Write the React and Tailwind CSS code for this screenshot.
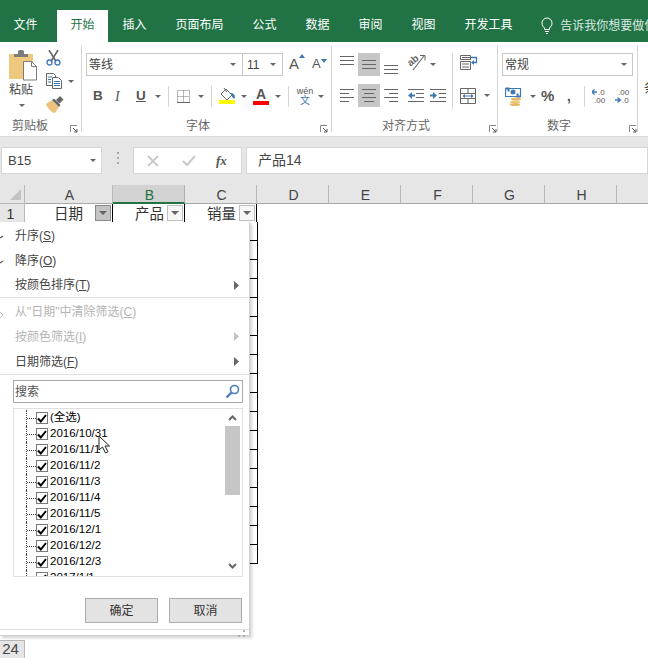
const Caret = ({ className = "", big }) => (
  <svg width={big ? 8 : 6} height={big ? 4 : 3} viewBox="0 0 8 4" className={`block shrink-0 ${className}`}><path d="M0 0h8L4 4z" fill="#666" /></svg>
);

const Launcher = () => (
  <svg width="8" height="8" viewBox="0 0 8 8" className="block shrink-0">
    <path d="M.5 7V.5H7" fill="none" stroke="#8a8a8a" />
    <path d="M3 3l4 4M7 4v3H4" fill="none" stroke="#555" />
  </svg>
);

const Lines = ({ rows, w = 16, gap = 4, color = "#666" }) => (
  <svg width={w} height={(rows.length - 1) * gap + 1} className="block shrink-0">
    {rows.map(([a, b], i) => (
      <rect key={i} x={a} y={i * gap} width={b - a} height="1" fill={color} />
    ))}
  </svg>
);

const Paste = () => (
  <svg width="29" height="31" viewBox="0 0 29 31" className="block">
    <rect x="0" y="4" width="24" height="25" fill="#edc87e" />
    <path d="M5 7V4h4V1.500C9 .5 10 0 12 0s3 .5 3 1.500V4h4v3z" fill="#7b7b7b" />
    <path d="M14.500 11.500h8l5 5v13.500h-13z" fill="#fff" stroke="#7b7b7b" />
    <path d="M22.500 11.500v5h5" fill="none" stroke="#7b7b7b" />
  </svg>
);

const Scissors = () => (
  <svg width="15" height="16" viewBox="0 0 15 16" className="block">
    <path d="M3 0l6.500 10.500M12 0L5.500 10.500" stroke="#666" strokeWidth="1.600" fill="none" />
    <circle cx="3.500" cy="12.500" r="2.500" fill="#fff" stroke="#3f78b5" strokeWidth="1.300" />
    <circle cx="11.500" cy="12.500" r="2.500" fill="#fff" stroke="#3f78b5" strokeWidth="1.300" />
  </svg>
);

const Copy = () => (
  <svg width="16" height="16" viewBox="0 0 16 16" className="block">
    <path d="M.5.5h7l2 2v10H.5z" fill="#fff" stroke="#666" />
    <path d="M6.500 4.500h6l3 3v8h-9z" fill="#fff" stroke="#666" />
    <path d="M2 4h4M2 6.500h3M2 9h3M8 8.500h6M8 10.500h6M8 12.500h6" stroke="#3f78b5" />
  </svg>
);

const Brush = () => (
  <svg width="18" height="17" viewBox="0 0 18 17" className="block">
    <path d="M0 8l6-4 7 7-4 6c-3 0-8-5-9-9z" fill="#edc27a" />
    <path d="M6 4l7 7 1.500-2-6.500-6.500z" fill="#666" />
    <path d="M10 4l4-4 3.500 3.500-4 4z" fill="#666" />
  </svg>
);

const BorderIcon = () => (
  <svg width="13" height="13" viewBox="0 0 13 13" className="block">
    <path d="M.5.5h12v12H.5zM6.500.5v12M.5 6.500h12" fill="none" stroke="#777" strokeDasharray="1 1" />
    <path d="M0 12.500h13" stroke="#666" />
  </svg>
);

const FillIcon = () => (
  <svg width="17" height="16" viewBox="0 0 17 16" className="block">
    <path d="M7 1l6 6-5 5-6-6z" fill="#fff" stroke="#666" />
    <path d="M5 0l3 4" stroke="#666" />
    <path d="M12 5c2 0 4 2 4 4 0 1-1 2-2 1-1-1-2-3-2-5z" fill="#3f78b5" />
    <rect x="0" y="12" width="16" height="4" fill="#ffff00" />
  </svg>
);

const Orient = () => (
  <svg width="18" height="18" viewBox="0 0 18 18" className="block">
    <path d="M5 17L16 3" stroke="#666" strokeWidth="1.100" />
    <path d="M12 2.500h5v5" fill="none" stroke="#666" />
    <text x="0" y="11" fontSize="10" fontWeight="700" fill="#666" transform="rotate(-40 5 9)" fontFamily="Liberation Sans">ab</text>
  </svg>
);

const Wrap = () => (
  <svg width="18" height="16" viewBox="0 0 18 16" className="block">
    <path d="M.5 1.500h10v4H.5zM.5 7.500h10v8H.5z" fill="#fff" stroke="#666" />
    <path d="M2 3.500h8M2 10h7M2 13h7" stroke="#666" />
    <path d="M11 3.500h5.500v5h-4" fill="none" stroke="#3f78b5" strokeWidth="1.300" />
    <path d="M14 6l-3 2.500 3 2.500z" fill="#3f78b5" />
  </svg>
);

const Merge = () => (
  <svg width="16" height="16" viewBox="0 0 16 16" className="block">
    <path d="M.5.5h15v15H.5zM.5 5.500h15M.5 10.500h15M8 .5v5M8 10.500v5" fill="none" stroke="#666" />
    <path d="M3 8h10" stroke="#3f78b5" />
    <path d="M5 6v4L2.500 8zM11 6v4l2.500-2z" fill="#3f78b5" />
  </svg>
);

const Indent = ({ flip }) => (
  <svg width="16" height="13" viewBox="0 0 16 13" className="block">
    <path d="M0 .5h16M0 12.500h16" stroke="#666" />
    <path d={flip ? "M9 4.500h7M9 8.500h7" : "M8 4.500h8M8 8.500h8"} stroke="#666" />
    {flip ? <path d="M0 5.500h3V3l4 3.500-4 3.500V7.500H0z" fill="#3f78b5" /> : <path d="M7 5.500H4V3L0 6.500 4 10V7.500h3z" fill="#3f78b5" />}
  </svg>
);

const Currency = () => (
  <svg width="18" height="19" viewBox="0 0 18 19" className="block">
    <path d="M.5 1.500h15v8H.5z" fill="#fff" stroke="#3f78b5" strokeWidth="1.200" />
    <path d="M.5 1.500h3v3M15.500 9.500h-3v-3" fill="none" stroke="#3f78b5" strokeWidth="2" />
    <circle cx="8" cy="5" r="2.500" fill="#3f78b5" />
    <ellipse cx="11" cy="12" rx="5" ry="1.500" fill="#e6b765" />
    <ellipse cx="10" cy="15" rx="5" ry="1.500" fill="#edc87e" />
    <ellipse cx="10" cy="17.500" rx="5" ry="1.500" fill="#e6b765" />
  </svg>
);

const Decimal = ({ up }) => (
  <svg width="16" height="16" viewBox="0 0 16 16" className="block">
    <path d={up ? "M0 4h5M2.500 1.500L0 4l2.500 2.500" : "M0 12h5M2.500 9.500L5.500 12l-3 2.500"} fill="none" stroke="#3f78b5" strokeWidth="1.300" />
    <text x={up ? 6 : 3} y="7" fontSize="8" fill="#555" fontFamily="Liberation Sans">{up ? ".0" : ".00"}</text>
    <text x={up ? 2 : 7} y="15" fontSize="8" fill="#555" fontFamily="Liberation Sans">{up ? ".00" : ".0"}</text>
  </svg>
);

const Sep = ({ className = "" }) => <div className={`w-px bg-[#d4d4d4] shrink-0 ${className}`} />;

const GroupFoot = ({ label, pad, end }) => (
  <div className="flex items-center h-[20px] mt-auto text-[12px] text-[#666]">
    <span style={{ marginLeft: pad }}>{label}</span>
    <div className="ml-auto mt-[6px]" style={{ marginRight: end }}><Launcher /></div>
  </div>
);

const Clipboard = () => (
  <div className="w-[81px] flex flex-col shrink-0">
    <div className="flex pt-[8px]">
      <div className="ml-[9px] w-[36px] flex flex-col">
        <Paste />
        <span className="text-[12px] leading-[16px] mt-[1px] text-[#444]">粘贴</span>
        <Caret className="ml-[10px] mt-[6px]" />
      </div>
      <div className="flex flex-col ml-[1px]">
        <Scissors />
        <div className="flex items-center mt-[7px]">
          <Copy />
          <Caret className="ml-[6px]" />
        </div>
        <div className="mt-[7px]"><Brush /></div>
      </div>
    </div>
    <GroupFoot label="剪贴板" pad="12px" end="3px" />
  </div>
);

const Font = () => (
  <div className="w-[249px] flex flex-col shrink-0">
    <div className="flex items-center mt-[11px] pl-[4px]">
      <div className="w-[157px] h-[23px] border border-[#c6c6c6] flex items-center px-[2px] text-[12px] text-[#444]">
        <span>等线</span><Caret className="ml-auto mr-[4px]" />
      </div>
      <div className="w-[40px] h-[23px] border border-l-0 border-[#c6c6c6] flex items-center px-[4px] text-[12px] text-[#444]">
        <span>11</span><Caret className="ml-auto mr-[2px]" />
      </div>
      <div className="w-[20px] ml-[6px] relative flex text-[15px] font-normal text-[#555]">
        A<svg width="6" height="4" className="block mt-[1px]"><path d="M0 4h6L3 0z" fill="#3f78b5" /></svg>
      </div>
      <div className="ml-[3px] flex text-[13px] text-[#555] items-end h-[18px]">
        A<svg width="6" height="4" className="block mb-[11px]"><path d="M0 0h6L3 4z" fill="#3f78b5" /></svg>
      </div>
    </div>
    <div className="flex items-center mt-[8px] h-[24px] text-[#555]">
      <span className="ml-[11px] w-[22px] text-[13.500px] font-bold">B</span>
      <span className="w-[21px] text-[14px] italic font-['Liberation_Serif',serif]">I</span>
      <span className="w-[19px] text-[13.500px] font-bold underline">U</span>
      <Caret />
      <Sep className="h-[21px] ml-[7px]" />
      <div className="ml-[8px]"><BorderIcon /></div>
      <Caret className="ml-[8px]" />
      <Sep className="h-[21px] ml-[7px]" />
      <div className="ml-[7px]"><FillIcon /></div>
      <Caret className="ml-[5px]" />
      <div className="ml-[6px] w-[16px] flex flex-col items-center">
        <span className="text-[14px] leading-[14px] font-bold">A</span>
        <div className="w-[16px] h-[4px] bg-[#ff0000]" />
      </div>
      <Caret className="ml-[6px]" />
      <Sep className="h-[21px] ml-[7px]" />
      <div className="ml-[8px] w-[16px] flex flex-col items-center leading-[10px]">
        <span className="text-[9px]">wén</span>
        <span className="text-[10px] text-[#3f78b5]">文</span>
      </div>
      <Caret className="ml-[5px]" />
    </div>
    <GroupFoot label="字体" pad="104px" end="3px" />
  </div>
);

const L1 = [[0, 14], [0, 14], [0, 14]];
const Align = () => (
  <div className="w-[165px] flex flex-col shrink-0">
    <div className="flex mt-[11px] h-[56px] pl-[8px]">
      <div className="flex flex-col w-[113px]">
        <div className="flex h-[23px]">
          <div className="w-[18px] pt-[3px]"><Lines rows={L1} w={14} /></div>
          <div className="w-[22px] h-[23px] bg-[#c6c6c6] flex items-center justify-center"><Lines rows={L1} w={14} /></div>
          <div className="w-[18px] ml-[4px] pt-[12px]"><Lines rows={L1} w={14} /></div>
          <div className="ml-[6px]"><Orient /></div>
          <Caret className="ml-[4px] mt-[10px]" />
        </div>
        <div className="flex items-center h-[23px] mt-[8px]">
          <div className="w-[18px]"><Lines rows={[[0, 14], [0, 9], [0, 14], [0, 9]]} w={14} /></div>
          <div className="w-[22px] h-[23px] bg-[#c6c6c6] flex items-center justify-center"><Lines rows={[[0, 14], [2, 12], [0, 14], [2, 12]]} w={14} /></div>
          <div className="w-[18px] ml-[4px]"><Lines rows={[[0, 14], [5, 14], [0, 14], [5, 14]]} w={14} /></div>
          <div className="ml-[6px]"><Indent /></div>
          <div className="ml-[6px]"><Indent flip /></div>
        </div>
      </div>
      <Sep className="h-[56px] ml-[-1px]" />
      <div className="flex flex-col ml-[7px]">
        <div className="h-[23px] pt-[1px]"><Wrap /></div>
        <div className="flex items-center h-[23px] mt-[8px]">
          <Merge />
          <Caret className="ml-[8px]" />
        </div>
      </div>
    </div>
    <GroupFoot label="对齐方式" pad="50px" end="0px" />
  </div>
);

const NumberGroup = () => (
  <div className="w-[139px] flex flex-col shrink-0">
    <div className="mt-[11px] ml-[4px] w-[131px] h-[23px] border border-[#c6c6c6] flex items-center px-[2px] text-[12px] text-[#444]">
      <span>常规</span><Caret className="ml-auto mr-[3px]" />
    </div>
    <div className="flex items-center mt-[8px] h-[24px] pl-[7px] text-[#555]">
      <Currency />
      <Caret className="ml-[7px]" />
      <span className="ml-[5px] w-[26px] text-[15px] font-bold">%</span>
      <span className="w-[17px] text-[14px] font-bold">,</span>
      <Sep className="h-[21px]" />
      <div className="ml-[7px]"><Decimal up /></div>
      <div className="ml-[7px]"><Decimal /></div>
    </div>
    <GroupFoot label="数字" pad="49px" end="0px" />
  </div>
);

const tabs = [["文件", "ml-[-1px]"], ["开始", "ml-[5px]"], ["插入"], ["页面布局"], ["公式"], ["数据"], ["审阅"], ["视图"], ["开发工具"]];

const Cell = ({ w, children, right = true, className = "" }) => (
  <div className={`shrink-0 flex items-center ${right ? "border-r border-black" : ""} ${className}`} style={{ width: w }}>{children}</div>
);

const FilterBtn = ({ hot }) => (
  <div className={`w-[16px] h-[16px] mr-[1px] shrink-0 flex items-center justify-center border ${hot ? "bg-[#c4c4c4] border-[#8a8a8a]" : "bg-[#f6f6f6] border-[#c0c0c0]"}`}>
    <Caret big />
  </div>
);

const ColHead = ({ w, label, active }) => (
  <div className={`shrink-0 h-full flex items-center justify-center pt-[3px] pl-[2px] text-[14px] text-[#444] border-r ${active ? "bg-[#d2d2d2] border-[#b0b0b0] border-b-2 border-b-[#217346] text-[#217346]" : "border-[#b8b8b8] border-b border-b-[#a8a8a8]"}`} style={{ width: w }}>{label}</div>
);

const MenuItem = ({ children, disabled, arrow, h = "h-[25px]" }) => (
  <div className={`${h} shrink-0 flex items-center pl-[15px] pr-[10px] text-[12px] ${disabled ? "text-[#b4b4b4]" : "text-[#444]"}`}>
    <span>{children}</span>
    {arrow && (
      <svg width="5" height="9" className="block ml-auto"><path d="M0 0l5 4.500L0 9z" fill={disabled ? "#c4c4c4" : "#666"} /></svg>
    )}
  </div>
);

const Check = () => (
  <div className="w-[12px] h-[12px] border border-[#7a7a7a] bg-white shrink-0 flex items-center justify-center">
    <svg width="10" height="9" viewBox="0 0 10 9" className="block"><path d="M1 4.500L3.800 7.500 9 1" fill="none" stroke="#000" strokeWidth="2" /></svg>
  </div>
);

const dates = ["(全选)", "2016/10/31", "2016/11/1", "2016/11/2", "2016/11/3", "2016/11/4", "2016/11/5", "2016/12/1", "2016/12/2", "2016/12/3", "2017/1/1"];

const Menu = () => (
  <div className="absolute left-0 top-[222px] w-[250px] h-[414px] bg-white border-r border-b border-[#d0d0d0] shadow-[2px_2px_3px_rgba(0,0,0,0.18)] pt-[1px] flex flex-col">
    <svg width="5" height="100" className="absolute left-0 top-[10px] block">
      <path d="M0 6l3-2M0 31l3-2" stroke="#555" strokeWidth="1.200" />
      <path d="M0 80l3 3-3 3" stroke="#bbb" fill="none" />
    </svg>
    <MenuItem>升序(<u>S</u>)</MenuItem>
    <MenuItem>降序(<u>O</u>)</MenuItem>
    <MenuItem arrow h="h-[24px]">按颜色排序(<u>T</u>)</MenuItem>
    <div className="h-px bg-[#e2e2e2] mb-[1px] shrink-0" />
    <MenuItem disabled>从"日期"中清除筛选(<u>C</u>)</MenuItem>
    <MenuItem disabled arrow>按颜色筛选(<u>I</u>)</MenuItem>
    <MenuItem arrow>日期筛选(<u>F</u>)</MenuItem>
    <div className="h-px bg-[#e2e2e2] shrink-0" />
    <div className="mt-[5px] ml-[13px] w-[230px] h-[23px] border border-[#a8a8a8] flex items-center pl-[1px] pr-[2px] text-[12px] text-[#555] shrink-0">
      <span>搜索</span>
      <svg width="15" height="15" viewBox="0 0 15 15" className="block ml-auto">
        <circle cx="9.500" cy="5.500" r="4" fill="none" stroke="#4a7db5" strokeWidth="1.600" />
        <path d="M6.500 8.500L1.500 13.500" stroke="#4a7db5" strokeWidth="2.400" />
      </svg>
    </div>
    <div className="mt-[5px] ml-[13px] w-[230px] h-[169px] border border-[#e0e0e0] flex overflow-hidden shrink-0">
      <div className="flex-1 pl-[12px] pt-[1px] flex flex-col">
        {dates.map((d) => (
          <div key={d} className="h-[16px] shrink-0 flex items-center border-l border-dotted border-[#444] text-[11.500px] text-black">
            <div className="w-[9px] border-t border-dotted border-[#444]" />
            <Check />
            <span className="ml-[2px]">{d}</span>
          </div>
        ))}
      </div>
      <div className="w-[15px] mr-[2px] flex flex-col items-center shrink-0">
        <svg width="9" height="6" className="block mt-[6px]"><path d="M1 5l3.500-3.500L8 5" fill="none" stroke="#666" strokeWidth="2" /></svg>
        <div className="w-[15px] h-[69px] bg-[#c6c6c6] mt-[5px]" />
        <svg width="9" height="6" className="block mt-auto mb-[7px]"><path d="M1 1l3.500 3.500L8 1" fill="none" stroke="#666" strokeWidth="2" /></svg>
      </div>
    </div>
    <div className="flex justify-end gap-[11px] pr-[7px] mt-[21px] shrink-0">
      <div className="w-[73px] h-[25px] bg-[#e3e3e3] border border-[#adadad] flex items-center justify-center text-[12px] text-[#333]">确定</div>
      <div className="w-[73px] h-[25px] bg-[#e3e3e3] border border-[#adadad] flex items-center justify-center text-[12px] text-[#333]">取消</div>
    </div>
    <div className="mt-[6px] flex-1 border-t border-[#e2e2e2] flex justify-end items-end pr-[4px] pb-[1px]">
      <svg width="7" height="7" className="block"><path d="M5 0h2v2H5zM0 5h2v2H0zM5 5h2v2H5z" fill="#b0b0b0" /></svg>
    </div>
    <svg width="13" height="19" viewBox="0 0 13 19" className="absolute left-[98px] top-[213px] block">
      <path d="M1 1v14l3.500-3 3 6 2.500-1.200-3-5.800h4.500z" fill="#fff" stroke="#222" strokeWidth="1" />
    </svg>
  </div>
);

export default function App() {
  return (
    <div className="relative w-[648px] h-[658px] overflow-hidden bg-white font-['Liberation_Sans','Noto_Sans_CJK_SC',sans-serif]">
      <div className="h-[42px] bg-[#217346] flex items-end text-[12px] text-white whitespace-nowrap">
        {tabs.map(([t, m]) => (
          <div key={t} className={`h-[32px] pb-[2px] flex items-center justify-center shrink-0 ${t === "开始" ? "w-[51px] bg-white text-[#217346]" : "px-[14.500px]"} ${m || ""}`}>{t}</div>
        ))}
        <svg width="12" height="17" viewBox="0 0 12 17" className="block shrink-0 ml-[14px] mb-[8px]">
          <path d="M3.500 11C2 9.500 1 8.500 1 6a5 5 0 0 1 10 0c0 2.500-1 3.500-2.500 5v1.500h-5zM4 14.500h4M5 16.500h2" fill="none" stroke="#fff" />
        </svg>
        <div className="h-[32px] flex items-center ml-[7px] text-[#dbe8e0] shrink-0">告诉我你想要做什么</div>
      </div>

      <div className="h-[94px] flex bg-white overflow-hidden">
        <Clipboard />
        <Sep className="h-[86px] mt-[4px]" />
        <Font />
        <Sep className="h-[86px] mt-[4px]" />
        <Align />
        <Sep className="h-[86px] mt-[4px]" />
        <NumberGroup />
        <Sep className="h-[86px] mt-[4px]" />
        <span className="ml-[6px] mt-[36px] text-[13px] text-[#444] shrink-0">条件格式</span>
      </div>

      <div className="h-[49px] bg-[#e6e6e6] border-t border-[#dcdcdc] pt-[10px] flex items-start">
        <div className="ml-[1px] w-[101px] h-[27px] bg-white border border-[#d6d6d6] flex items-center pl-[6px] pr-[5px] text-[13px] text-[#444]">
          <span>B15</span><Caret className="ml-auto" />
        </div>
        <div className="ml-[15px] mt-[5px] flex flex-col gap-[3px]">
          <div className="w-[2px] h-[2px] bg-[#a8a8a8]" />
          <div className="w-[2px] h-[2px] bg-[#a8a8a8]" />
          <div className="w-[2px] h-[2px] bg-[#a8a8a8]" />
        </div>
        <div className="ml-[14px] w-[109px] h-[27px] bg-white border border-[#d6d6d6] flex items-center text-[#c4c4c4]">
          <svg width="12" height="12" className="block ml-[13px]"><path d="M1 1l10 10M11 1L1 11" stroke="#c8c8c8" strokeWidth="1.800" /></svg>
          <svg width="14" height="12" className="block ml-[23px]"><path d="M1 6l4 4 8-9" fill="none" stroke="#c8c8c8" strokeWidth="2" /></svg>
          <span className="ml-[20px] text-[13px] italic font-bold text-[#555] font-['Liberation_Serif',serif]">fx</span>
        </div>
        <div className="ml-[4px] flex-1 h-[27px] bg-white border border-[#d6d6d6] flex items-center pl-[11px] text-[14px] text-[#444]">产品14</div>
      </div>

      <div className="h-[19px] flex bg-[#e6e6e6]">
        <div className="w-[25px] shrink-0 h-full border-r border-b border-[#b8b8b8] flex items-end justify-end pr-[3px] pb-[3px]">
          <svg width="11" height="11" className="block"><path d="M11 0v11H0z" fill="#c2c2c2" /></svg>
        </div>
        <ColHead w="88px" label="A" />
        <ColHead w="72px" label="B" active />
        <ColHead w="72px" label="C" />
        {["D", "E", "F", "G", "H", "I"].map((c) => <ColHead key={c} w="72px" label={c} />)}
      </div>

      <div className="h-[18px] flex overflow-hidden text-[14.500px] text-[#333]">
        <div className="w-[25px] shrink-0 bg-[#e6e6e6] border-r border-[#b8b8b8] pt-[3px] pr-[3px] flex items-center justify-center text-[14px]">1</div>
        <Cell w="88px" className="justify-end"><span className="mr-[12px] mt-[3px]">日期</span><FilterBtn hot /></Cell>
        <Cell w="72px" className="justify-end"><span className="mr-[3px] mt-[3px]">产品</span><FilterBtn /></Cell>
        <Cell w="72px" className="justify-end"><span className="mr-[3px] mt-[3px]">销量</span><FilterBtn /></Cell>
      </div>
      <div className="flex flex-col">
        {Array.from({ length: 18 }, (_, i) => (
          <div key={i} className="h-[19px] flex pl-[25px]">
            <div className="w-[233px] border-b border-r border-black" />
          </div>
        ))}
      </div>
      <div className="h-[76px]" />
      <div className="w-[25px] h-[18px] bg-[#e6e6e6] border-t border-r border-[#b8b8b8] pr-[3px] flex items-center justify-center text-[15px] text-[#444]">24</div>

      <Menu />
    </div>
  );
}
